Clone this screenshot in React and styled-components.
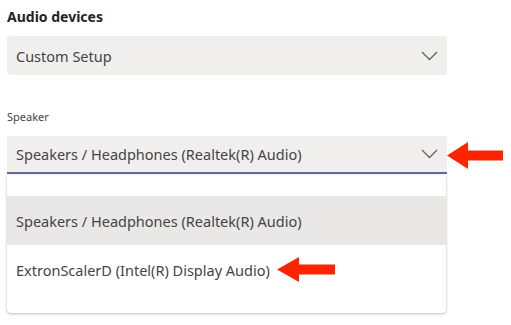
import React from "react";
import styled, { createGlobalStyle } from "styled-components";

const Global = createGlobalStyle`
  html, body { margin: 0; padding: 0; background: #ffffff; }
  body { font-family: "Noto Sans", "Open Sans", sans-serif; color: #3a3a3a; }
`;

const Page = styled.div`
  width: 511px;
  height: 325px;
  padding: 7px 0 0 7px;
  box-sizing: border-box;
  overflow: hidden;
`;

const Title = styled.div`
  font-size: 14px;
  font-weight: 700;
  color: #252423;
  line-height: 20px;
  height: 22px;
  margin-bottom: 7px;
`;

const Field = styled.div`
  width: 440px;
  display: flex;
  flex-direction: column;
`;

const Select = styled.div`
  box-sizing: border-box;
  width: 440px;
  height: ${(p) => (p.$open ? "38px" : "39px")};
  background: #f0efee;
  border-radius: ${(p) => (p.$open ? "3px 3px 0 0" : "3px")};
  border-bottom: ${(p) => (p.$open ? "2px solid #6264a7" : "none")};
  display: flex;
  align-items: center;
  justify-content: space-between;
  padding: 0 9px 0 9px;
  font-size: 14.5px;
  color: #444;
`;

const Label = styled.div`
  font-size: 11px;
  color: #444;
  line-height: 14px;
  margin: 35px 0 12px;
`;

const Row = styled.div`
  display: flex;
  align-items: center;
`;

const Menu = styled.div`
  box-sizing: border-box;
  width: 439px;
  margin-top: 1px;
  background: #fff;
  border-radius: 0 0 4px 4px;
  box-shadow: 0 1px 3px rgba(0, 0, 0, 0.25), 0 0 1px rgba(0, 0, 0, 0.15);
  padding: 21px 0 19px;
`;

const Item = styled.div`
  height: 49px;
  display: flex;
  align-items: center;
  padding: 0 9px;
  font-size: 14.5px;
  color: #444;
  background: ${(p) => (p.$hover ? "#e9e8e7" : "#fff")};
`;

const Chevron = () => (
  <svg width="17" height="10" viewBox="0 0 17 10" fill="none">
    <path d="M1 1 L8.5 8.5 L16 1" stroke="#616161" strokeWidth="1.3" />
  </svg>
);

const RedArrow = styled.svg`
  flex: none;
  display: block;
  margin-left: ${(p) => p.$ml || 0}px;
`;

const Arrow = ({ w, h, ml }) => {
  const head = Math.round(w * 0.38);
  const s1 = h / 2 - 5;
  const s2 = h / 2 + 5;
  return (
    <RedArrow $ml={ml} width={w} height={h} viewBox={`0 0 ${w} ${h}`}>
      <path
        d={`M0 ${h / 2} L${head} 0 L${head} ${s1} L${w} ${s1} L${w} ${s2} L${head} ${s2} L${head} ${h} Z`}
        fill="#ff2400"
      />
    </RedArrow>
  );
};

export default function App() {
  return (
    <>
      <Global />
      <Page>
        <Title>Audio devices</Title>
        <Field>
          <Select>
            <span>Custom Setup</span>
            <Chevron />
          </Select>
        </Field>
        <Label>Speaker</Label>
        <Row>
          <Select $open>
            <span>Speakers / Headphones (Realtek(R) Audio)</span>
            <Chevron />
          </Select>
          <Arrow w={56} h={27} ml={0} />
        </Row>
        <Menu>
          <Item $hover>Speakers / Headphones (Realtek(R) Audio)</Item>
          <Item>
            <span>ExtronScalerD (Intel(R) Display Audio)</span>
            <Arrow w={58} h={25} ml={7} />
          </Item>
        </Menu>
      </Page>
    </>
  );
}
